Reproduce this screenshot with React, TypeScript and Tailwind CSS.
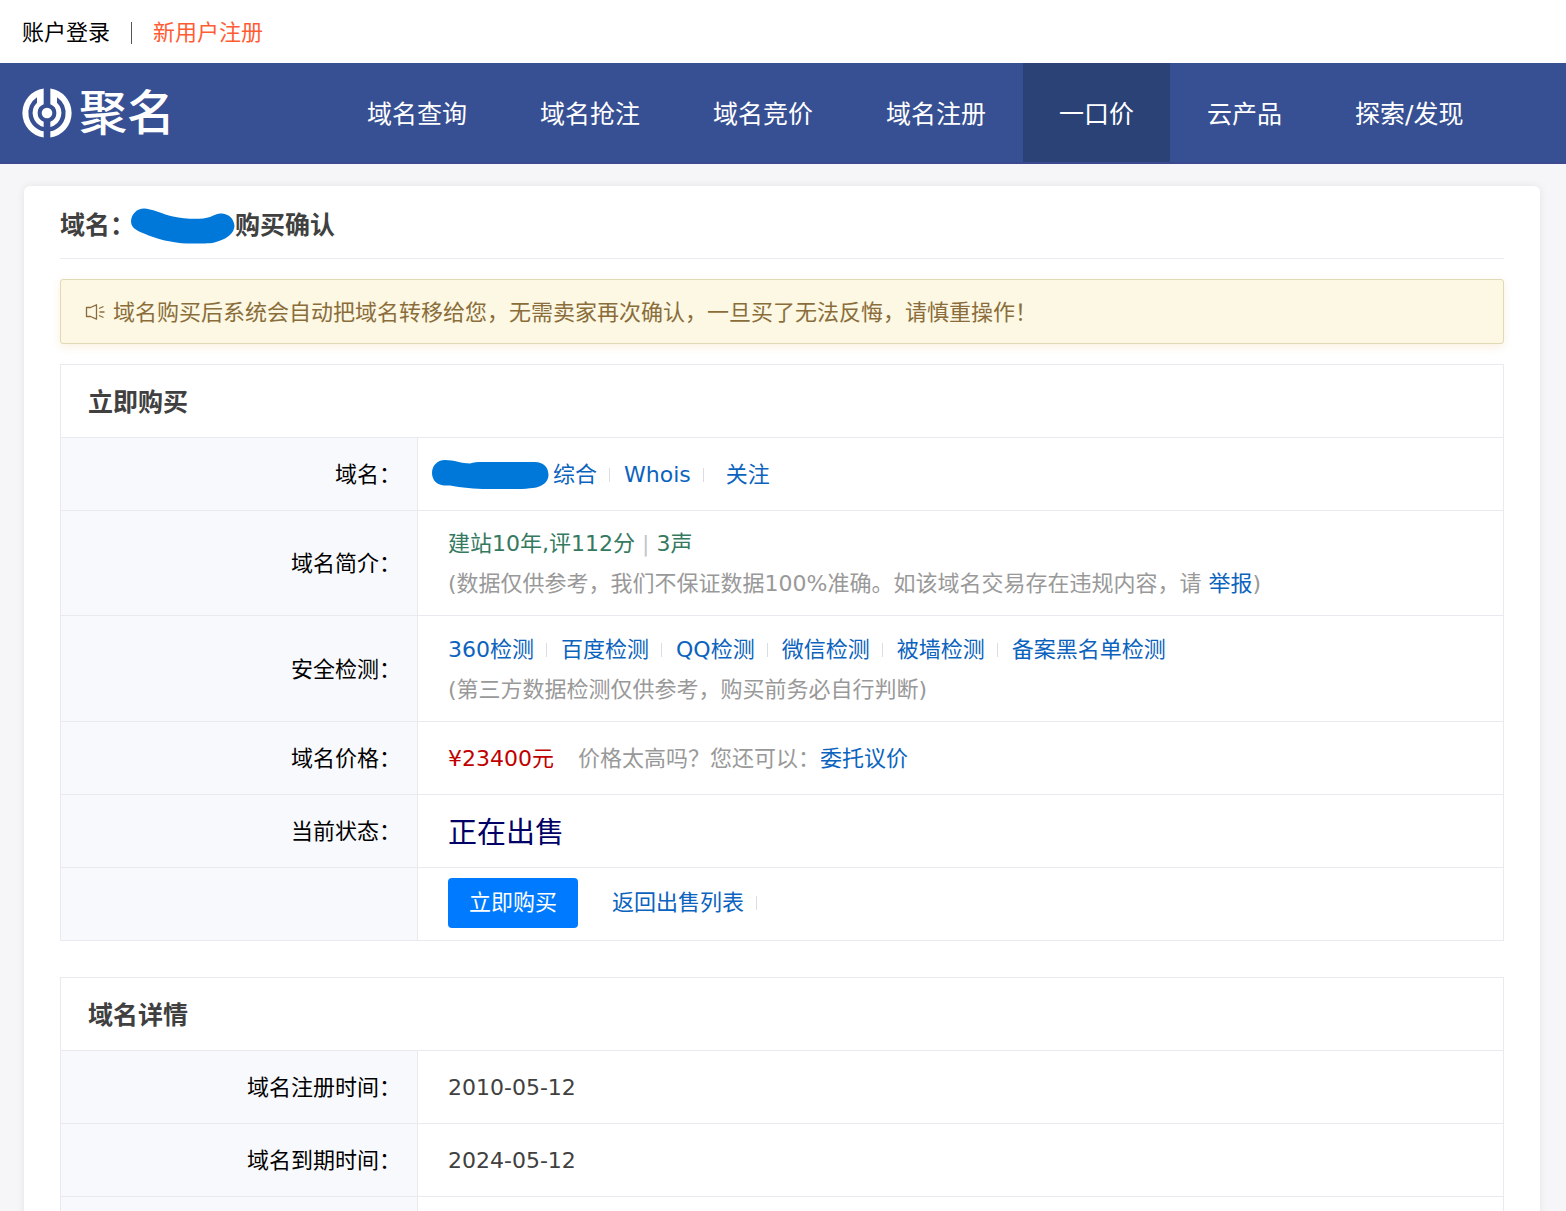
import type { ReactNode } from "react";

const navItems = [
  { label: "域名查询" },
  { label: "域名抢注" },
  { label: "域名竞价" },
  { label: "域名注册" },
  { label: "一口价", active: true },
  { label: "云产品" },
  { label: "探索/发现" },
];

const checks = ["360检测", "百度检测", "QQ检测", "微信检测", "被墙检测", "备案黑名单检测"];

const emblemHalf =
  "M-10 -73.3A74 74 0 0 0 -10 73.3V55.1A56 56 0 0 1 -30 -47.3V-30.8A43 43 0 0 0 -10 41.8V26.2A28 28 0 0 1 -10 -26.2Z";

function Logo() {
  return (
    <a href="#" aria-label="聚名" className="flex items-center gap-[7px] text-white">
      <svg viewBox="-75 -75 150 150" className="size-[50px]" fill="currentColor">
        <path d={emblemHalf} />
        <path d={emblemHalf} transform="scale(-1 1)" />
        <circle r="16" />
      </svg>
      <span className="text-[48px] leading-none font-medium">聚名</span>
    </a>
  );
}

function HornIcon() {
  return (
    <svg viewBox="0 0 20 18" className="h-[18px] w-5 shrink-0" fill="none" stroke="currentColor" strokeWidth="1.3">
      <path d="M1.5 4.5H5.5L11.5 1.8V16.2L5.5 13.500H1.500Z" strokeLinejoin="round" />
      <path d="M14 5.500L18.500 3.500M14.500 9H19.500M14 12.500L18.500 14.500" />
    </svg>
  );
}

function Divider() {
  return <span className="mr-3.5 ml-3 h-3.5 w-px shrink-0 bg-[#dcdce4]" />;
}

function TextLink({ children }: { children: ReactNode }) {
  return (
    <a href="#" className="text-[#0b63be] hover:underline">
      {children}
    </a>
  );
}

function Panel({ title, children }: { title: string; children: ReactNode }) {
  return (
    <section className="border border-b-0 border-[#e9e9ef]">
      <h2 className="border-b border-[#e9e9ef] px-[27px] pt-[18px] pb-3.5 text-[25px] leading-10 font-bold text-[#404040]">
        {title}
      </h2>
      <table className="w-full border-separate border-spacing-0">
        <tbody>{children}</tbody>
      </table>
    </section>
  );
}

function Row({ label, children }: { label: string; children?: ReactNode }) {
  return (
    <tr>
      <th
        scope="row"
        className="w-[357px] border-r border-b border-[#e9e9ef] bg-[#f8f9fc] pt-0.5 pr-4 text-right font-normal text-black"
      >
        {label}
      </th>
      <td className="border-b border-[#e9e9ef] pr-4 pl-[30px]">{children}</td>
    </tr>
  );
}

export default function App() {
  return (
    <div
      lang="zh-CN"
      className="min-h-screen bg-[#f6f5f8] font-['DejaVu_Sans','Noto_Sans_CJK_SC',sans-serif] text-[22px] leading-10 text-[#404040]"
    >
      <div className="flex h-[63px] items-center bg-white px-[22px] pt-0.5">
        <a href="#" className="text-black">
          账户登录
        </a>
        <span className="mx-[21px] h-[22px] w-px bg-[#555]" />
        <a href="#" className="text-[#ff5c33]">
          新用户注册
        </a>
      </div>

      <header className="flex h-[101px] items-stretch border-b-2 border-[#3c4990] bg-[#375093] px-[22px]">
        <Logo />
        <nav className="ml-[156px] flex gap-px text-[25px] whitespace-nowrap text-white">
          {navItems.map((item) => (
            <a
              key={item.label}
              href="#"
              className={item.active ? "flex items-center bg-[#2b4277] px-9 pt-1" : "flex items-center px-9 pt-1"}
            >
              {item.label}
            </a>
          ))}
        </nav>
      </header>

      <main className="pt-[22px] pr-[26px] pl-6">
        <div className="rounded-md bg-white px-9 pb-9 shadow-[0_0_8px_rgba(0,0,0,0.08)]">
          <h1 className="flex h-[73px] items-center border-b border-[#ebebf0] pt-2 text-[25px] font-bold">
            域名：
            <svg viewBox="0 0 104 36" className="-ml-1 h-9 w-[104px]" fill="#0078d9">
              <path d="M13 .5C20 .5 31 6 42 8.500C54 11 70 12 79 9C84 7 86 5.500 91 5.500C98 6 103 11 103.500 18C103 25 97 30 88 33C82 35.500 76 35.500 68 35.500H56C42 35 25 31 13 25.500C4 22 0 19 0 13C.5 6 6 .5 13 .5Z" />
            </svg>
            购买确认
          </h1>

          <div className="mt-5 flex h-[65px] items-center gap-2 rounded-[3px] border border-[#dfd9b5] bg-[#fcf8e3] px-6 text-[#8a6d3b] shadow-[0_3px_8px_rgba(230,180,100,0.2)]">
            <HornIcon />
            <p className="pt-0.5">域名购买后系统会自动把域名转移给您，无需卖家再次确认，一旦买了无法反悔，请慎重操作！</p>
          </div>

          <div className="mt-5 space-y-9">
            <Panel title="立即购买">
              <Row label="域名：">
                <div className="flex items-center pt-[17px] pb-[15px]">
                  <svg viewBox="0 0 117 30" className="mr-1 -ml-4 h-[30px] w-[117px]" fill="#0078d9">
                    <path d="M13 0C22 0 30 3.500 38 3.500C42 2 45 2 50 2H103C111 2 116.500 7 116.500 15C116.500 22 110 27 101 28C97 28.500 92 29 85 29H56C43 29 29 27.500 18 25.500H12C5 25 0 20 0 13C0 6 5 0 13 0Z" />
                  </svg>
                  <TextLink>综合</TextLink>
                  <Divider />
                  <TextLink>Whois</TextLink>
                  <Divider />
                  <span className="ml-2">
                    <TextLink>关注</TextLink>
                  </span>
                </div>
              </Row>
              <Row label="域名简介：">
                <div className="pt-[13px] pb-[11px]">
                  <p className="text-[#35795f]">
                    建站10年,评112分 <span className="text-[#c4c4cc]">|</span> 3声
                  </p>
                  <p className="text-[#999]">
                    (数据仅供参考，我们不保证数据100%准确。如该域名交易存在违规内容，请 <TextLink>举报</TextLink>)
                  </p>
                </div>
              </Row>
              <Row label="安全检测：">
                <div className="pt-3.5 pb-[11px]">
                  <div className="flex items-center">
                    {checks.map((name, i) => (
                      <div key={name} className="flex items-center">
                        {i > 0 && <Divider />}
                        <TextLink>{name}</TextLink>
                      </div>
                    ))}
                  </div>
                  <p className="text-[#999]">(第三方数据检测仅供参考，购买前务必自行判断)</p>
                </div>
              </Row>
              <Row label="域名价格：">
                <div className="flex pt-[17px] pb-[15px]">
                  <span className="mr-6 text-[#c00000]">¥23400元</span>
                  <span className="text-[#999]">价格太高吗？您还可以：</span>
                  <TextLink>委托议价</TextLink>
                </div>
              </Row>
              <Row label="当前状态：">
                <div className="pt-[18px] pb-3.5 text-[29px] text-[#000066]">正在出售</div>
              </Row>
              <Row label="">
                <div className="flex items-center pt-2.5 pb-3">
                  <button type="button" className="mr-[34px] h-[50px] rounded bg-[#007bff] px-[21px] text-white">
                    立即购买
                  </button>
                  <TextLink>返回出售列表</TextLink>
                  <Divider />
                </div>
              </Row>
            </Panel>

            <Panel title="域名详情">
              <Row label="域名注册时间：">
                <div className="pt-[17px] pb-[15px]">2010-05-12</div>
              </Row>
              <Row label="域名到期时间：">
                <div className="pt-[17px] pb-[15px]">2024-05-12</div>
              </Row>
              <Row label="">
                <div className="h-[72px]" />
              </Row>
            </Panel>
          </div>
        </div>
      </main>
    </div>
  );
}
